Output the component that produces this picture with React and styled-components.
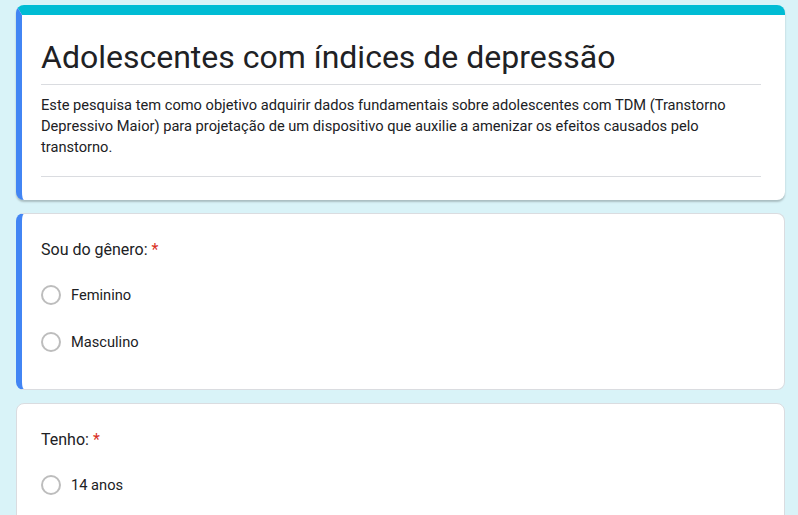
import React from "react";
import styled, { createGlobalStyle } from "styled-components";

const GlobalStyle = createGlobalStyle`
  body {
    margin: 0;
    background: #d9f3f8;
    font-family: Roboto, "Noto Sans", Arial, sans-serif;
    color: #202124;
  }
`;

const Page = styled.div`
  display: flex;
  flex-direction: column;
  gap: 13px;
  padding: 5px 13px 0 16px;
`;

const Card = styled.div`
  background: #fff;
  border-radius: 8px;
  border: 1px solid #dadce0;
  border-left: ${({ $active }) => ($active ? "6px solid #4285f4" : "1px solid #dadce0")};
  padding: 0 24px 0 ${({ $active }) => ($active ? "19px" : "24px")};
  box-shadow: ${({ $shadow }) => ($shadow ? "0 2px 2px rgba(0,0,0,0.22)" : "none")};
`;

const HeaderCard = styled(Card)`
  border-top: 10px solid #00bcd4;
  border-right: none;
  border-bottom: none;
  padding-top: 22px;
  padding-bottom: 23px;
`;

const Title = styled.h1`
  margin: 0;
  font-size: 32px;
  font-weight: 400;
  line-height: 40px;
  padding-bottom: 7px;
  border-bottom: 1px solid #dadce0;
`;

const Description = styled.p`
  margin: 0;
  font-size: 14.65px;
  line-height: 21px;
  padding: 10px 0 18px;
  border-bottom: 1px solid #dadce0;
`;

const Question = styled.div`
  font-size: 16px;
  line-height: 24px;
  padding: 24px 0 8px;
`;

const Star = styled.span`
  color: #d93025;
  margin-left: 4px;
`;

const Options = styled.div`
  display: flex;
  flex-direction: column;
  gap: 27px;
  padding: 15px 0 37px;
`;

const Option = styled.label`
  display: flex;
  align-items: center;
  gap: 10px;
  font-size: 14.65px;
`;

const Radio = styled.span`
  width: 16px;
  height: 16px;
  border: 2px solid #bdbdbd;
  border-radius: 50%;
`;

function QuestionCard({ title, options, active }) {
  return (
    <Card $active={active}>
      <Question>
        {title}
        <Star>*</Star>
      </Question>
      <Options>
        {options.map((o) => (
          <Option key={o}>
            <Radio />
            {o}
          </Option>
        ))}
      </Options>
    </Card>
  );
}

export default function App() {
  return (
    <>
      <GlobalStyle />
      <Page>
        <HeaderCard $active $shadow>
          <Title>Adolescentes com índices de depressão</Title>
          <Description>
            Este pesquisa tem como objetivo adquirir dados fundamentais sobre adolescentes com TDM
            (Transtorno Depressivo Maior) para projetação de um dispositivo que auxilie a amenizar os
            efeitos causados pelo transtorno.
          </Description>
        </HeaderCard>
        <QuestionCard active title="Sou do gênero:" options={["Feminino", "Masculino"]} />
        <QuestionCard title="Tenho:" options={["14 anos"]} />
      </Page>
    </>
  );
}
